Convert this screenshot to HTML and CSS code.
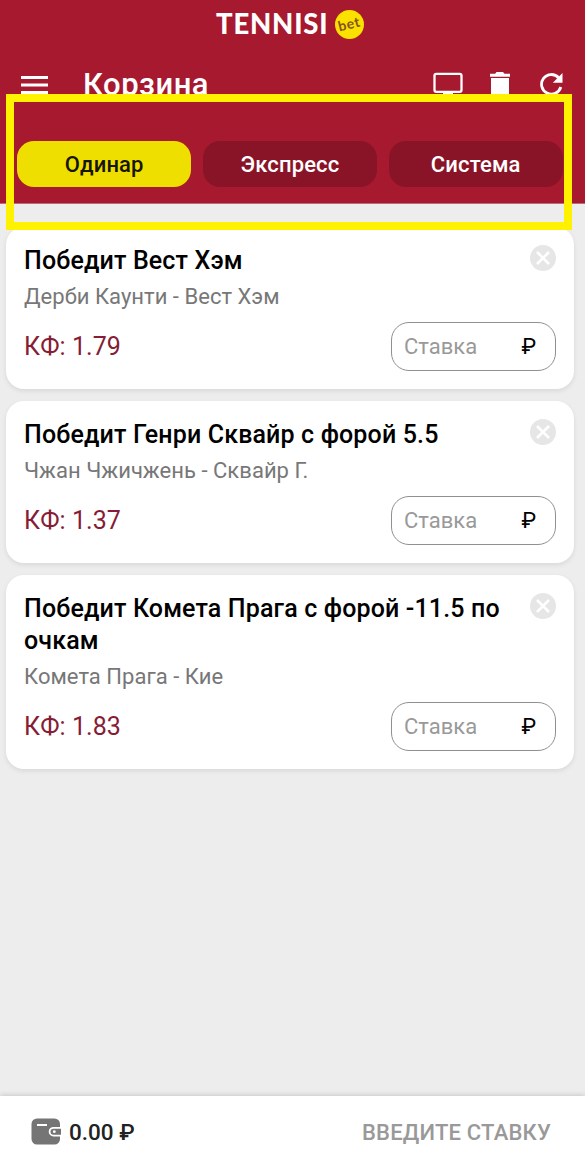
FILE: index.html
```html
<!DOCTYPE html>
<html lang="ru">
<head>
<meta charset="utf-8">
<title>Корзина</title>
<link rel="stylesheet" href="styles.css">
</head>
<body>
<div class="app">
  <header class="header">
    <div class="brand">
      <span class="brand-name">TENNISI</span>
      <span class="brand-badge"><span class="brand-bet">bet</span></span>
    </div>
    <div class="toolbar">
      <svg class="menu" width="27" height="20" viewBox="0 0 27 20" fill="#fff"><path d="M0 0h27v3H0zM0 7.500h27v3H0zM0 15h27v3H0z"/></svg>
      <h1 class="page-title">Корзина</h1>
      <div class="actions">
        <svg width="30" height="26" viewBox="0 0 30 26"><rect x="1.500" y="1.800" width="27" height="18" rx="1.800" fill="none" stroke="#fff" stroke-width="2.300"/><path d="M10 20h10v5H10z" fill="#fff"/></svg>
        <svg width="22" height="28" viewBox="0 0 22 28" fill="#fff"><path d="M1 1.800h5.200L7.500 0h6.500l1.500 1.800H21v3H1zM2 6h18v18a3 3 0 0 1-3 3H5a3 3 0 0 1-3-3z"/></svg>
        <svg width="24" height="24" viewBox="0 0 24 24"><path d="M19.600 5.700A9.800 9.800 0 1 0 21.800 15" fill="none" stroke="#fff" stroke-width="2.800"/><path d="M23.500 1V10.700H13.800z" fill="#fff"/></svg>
      </div>
    </div>
    <nav class="tabs">
      <button class="tab tab-active">Одинар</button>
      <button class="tab">Экспресс</button>
      <button class="tab">Система</button>
    </nav>
  </header>
  <main class="bets">
    <section class="card">
      <div class="card-head">
        <h2 class="card-title">Победит Вест Хэм</h2>
        <svg class="close" width="26" height="26" viewBox="0 0 26 26"><circle cx="13" cy="13" r="13" fill="#e6e6e6"/><path d="M7 7l12 12M19 7L7 19" stroke="#fff" stroke-width="2.600"/></svg>
      </div>
      <p class="match">Дерби Каунти - Вест Хэм</p>
      <div class="card-row"><span class="odds">КФ: 1.79</span><div class="stake"><span class="placeholder">Ставка</span><span class="currency">₽</span></div></div>
    </section>
    <section class="card">
      <div class="card-head">
        <h2 class="card-title">Победит Генри Сквайр с форой 5.5</h2>
        <svg class="close" width="26" height="26" viewBox="0 0 26 26"><circle cx="13" cy="13" r="13" fill="#e6e6e6"/><path d="M7 7l12 12M19 7L7 19" stroke="#fff" stroke-width="2.600"/></svg>
      </div>
      <p class="match">Чжан Чжичжень - Сквайр Г.</p>
      <div class="card-row"><span class="odds">КФ: 1.37</span><div class="stake"><span class="placeholder">Ставка</span><span class="currency">₽</span></div></div>
    </section>
    <section class="card">
      <div class="card-head">
        <h2 class="card-title">Победит Комета Прага с форой -11.5 по<br>очкам</h2>
        <svg class="close" width="26" height="26" viewBox="0 0 26 26"><circle cx="13" cy="13" r="13" fill="#e6e6e6"/><path d="M7 7l12 12M19 7L7 19" stroke="#fff" stroke-width="2.600"/></svg>
      </div>
      <p class="match">Комета Прага - Кие</p>
      <div class="card-row"><span class="odds">КФ: 1.83</span><div class="stake"><span class="placeholder">Ставка</span><span class="currency">₽</span></div></div>
    </section>
  </main>
  <footer class="footer">
    <svg class="wallet" width="30" height="27" viewBox="0 0 30 27"><rect x=".5" y=".5" width="28.500" height="26" rx="5.500" fill="#757575"/><path d="M6 7h10" stroke="#fff" stroke-width="2"/><path d="M30 9.800h-7.500a3.900 3.900 0 0 0 0 7.800H30" fill="#757575" stroke="#fff" stroke-width="1.800"/><circle cx="23.300" cy="13.700" r="1.400" fill="#fff"/></svg>
    <span class="balance">0.00 ₽</span>
    <span class="submit">ВВЕДИТЕ СТАВКУ</span>
  </footer>
  <div class="highlight"></div>
</div>
</body>
</html>
```
FILE: styles.css
```css
* { box-sizing: border-box; }
body { margin: 0; font-family: Roboto, "Liberation Sans", sans-serif; }
h1, h2, p { margin: 0; font-weight: 500; }
svg { display: block; flex: none; }
.app { position: relative; display: flex; flex-direction: column; width: 585px; height: 1161px; overflow: hidden; background: #ededed; }
.header { flex: none; height: 204px; background: #a6192e; border-bottom: 1px solid #b96b78; }
.brand { display: flex; align-items: center; height: 48px; padding-left: 216px; color: #fff; }
.brand-name { width: 119px; font: 900 27.500px/48px Lato, sans-serif; letter-spacing: .8px; white-space: nowrap; }
.brand-badge { display: flex; align-items: center; justify-content: center; width: 29px; height: 29px; border-radius: 50%; background: #fae100; }
.brand-bet { color: #86531b; font: 700 14px/20px Lato, sans-serif; letter-spacing: .5px; transform: rotate(-14deg); }
.toolbar { display: flex; align-items: flex-start; height: 93px; padding: 0 22px 0 21px; }
.menu { margin-top: 28px; }
.page-title { margin: 17px 0 0 35px; color: #fff; font-size: 31px; line-height: 40px; letter-spacing: .5px; }
.actions { display: flex; gap: 26px; margin: 24px 0 0 auto; }
.actions svg:last-child { margin-left: 2px; }
.tabs { display: flex; gap: 11.500px; padding-left: 17px; }
.tab { width: 174.300px; height: 46px; padding: 2px 0 0; border: 0; border-radius: 17px; background: #8a1427; color: #fff; font: 500 22px/44px Roboto, sans-serif; letter-spacing: .15px; }
.tab-active { background: #eedf00; color: #151500; }
.bets { display: flex; flex: 1; flex-direction: column; gap: 12px; padding: 23px 11px 0 6px; }
.card { padding: 18px 18px 18px; border-radius: 18px; background: #fff; box-shadow: 0 2px 5px rgba(0, 0, 0, .09); }
.card-head { display: flex; justify-content: space-between; align-items: flex-start; }
.card-title { color: #000; font-size: 25px; line-height: 32px; letter-spacing: .15px; white-space: nowrap; }
.match { margin-top: 6px; color: #777; font-size: 22px; font-weight: 400; line-height: 28px; letter-spacing: .03px; }
.card-row { display: flex; align-items: center; justify-content: space-between; margin-top: 11px; }
.odds { color: #861c35; font-size: 25px; line-height: 49px; letter-spacing: .08px; }
.stake { display: flex; align-items: center; justify-content: space-between; width: 165px; height: 49px; padding: 0 19px 0 12px; border: 1px solid #909090; border-radius: 18px; }
.placeholder { color: #999; font-size: 22px; }
.currency { color: #000; font-size: 22px; font-weight: 400; }
.footer { display: flex; flex: none; align-items: center; height: 65px; padding: 8px 34px 0 31px; background: #fff; box-shadow: 0 -1px 5px rgba(0, 0, 0, .16); }
.wallet { margin-bottom: 2px; }
.balance { margin: 0 0 1px 8px; color: #222; font-size: 22.500px; line-height: 26px; font-weight: 500; }
.submit { margin-left: auto; color: #999; font-size: 22px; font-weight: 500; letter-spacing: .2px; }
.highlight { position: absolute; top: 94px; left: 6px; width: 566px; height: 136px; border: 8px solid #fff200; }
```
